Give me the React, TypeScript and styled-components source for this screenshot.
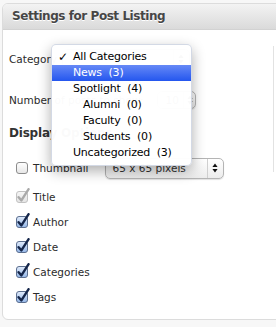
import React from "react";
import styled, { createGlobalStyle } from "styled-components";

const GlobalStyle = createGlobalStyle`
  html, body { margin: 0; padding: 0; background: #f7f7f7; overflow: hidden; }
  body { font-family: "DejaVu Sans", Verdana, sans-serif; color: #333; }
  * { box-sizing: border-box; }
`;

const Page = styled.div`
  width: 276px;
  height: 327px;
  padding: 3px 0 0 2px;
  overflow: hidden;
`;

const Panel = styled.div`
  width: 310px;
  border: 1px solid #dcdcdc;
  border-radius: 6px;
  background: #fff;
`;

const Header = styled.h3`
  margin: 0;
  height: 26px;
  padding-left: 9px;
  border-bottom: 1px solid #d2d2d2;
  border-radius: 5px 5px 0 0;
  background: linear-gradient(#f3f3f3, #dadada);
  color: #464646;
  font-size: 12px;
  font-weight: bold;
  line-height: 25px;
  letter-spacing: -0.45px;
  text-shadow: 0 1px 0 #fff;
`;

const Body = styled.div`
  display: flex;
`;

const Main = styled.div`
  width: 270px;
  padding: 19px 0 14px 6px;
  display: flex;
  flex-direction: column;
`;

const Side = styled.div`
  margin-top: 16px;
  height: 126px;
  border-left: 1px solid #e2e2e2;
`;

const FieldRow = styled.div<{ $h: number; $mt?: number }>`
  display: flex;
  align-items: center;
  height: ${(p) => p.$h}px;
  margin-top: ${(p) => p.$mt ?? 0}px;
`;

const Label = styled.span`
  font-size: 10.5px;
  color: #2b2b2b;
  white-space: nowrap;
`;

const Heading = styled.h4`
  margin: 16px 0 0;
  height: 16px;
  line-height: 16px;
  font-size: 12px;
  font-weight: bold;
  color: #333;
  letter-spacing: -0.2px;
`;

const SelectBox = styled.div<{ $w: number; $h: number; $ml: number }>`
  position: relative;
  width: ${(p) => p.$w}px;
  height: ${(p) => p.$h}px;
  margin-left: ${(p) => p.$ml}px;
  display: flex;
  align-items: center;
  border: 1px solid #b4b4b4;
  border-radius: 5px;
  background: linear-gradient(#ffffff, #ececec);
  box-shadow: 0 1px 1px rgba(0, 0, 0, 0.12);
  font-size: 10.5px;
  color: #333;
`;

const SelectText = styled.span`
  flex: 1;
  padding-left: 7px;
  white-space: nowrap;
`;

const ArrowPart = styled.span<{ $w: number }>`
  width: ${(p) => p.$w}px;
  height: 100%;
  display: flex;
  align-items: center;
  justify-content: center;
  border-left: 1px solid #cfcfcf;
`;

const Menu = styled.div`
  position: absolute;
  left: -12px;
  top: -6px;
  width: 141px;
  padding: 4px 0;
  background: rgba(255, 255, 255, 0.975);
  border: 1px solid rgba(110, 130, 170, 0.3);
  border-radius: 5px;
  box-shadow: 0 5px 14px rgba(0, 0, 0, 0.32);
  z-index: 5;
`;

const MenuItem = styled.div<{ $indent?: boolean; $active?: boolean }>`
  position: relative;
  height: 16px;
  line-height: 16px;
  padding-left: ${(p) => (p.$indent ? 31 : 21)}px;
  font-size: 11px;
  letter-spacing: -0.2px;
  white-space: pre;
  color: ${(p) => (p.$active ? "#fff" : "#000")};
  background: ${(p) =>
    p.$active ? "linear-gradient(#6689f6, #2456ee)" : "transparent"};
`;

const Tick = styled.span`
  position: absolute;
  left: 6px;
  top: 0;
  font-size: 12px;
  font-weight: bold;
`;

const CheckRow = styled.label<{ $mt: number }>`
  display: flex;
  align-items: center;
  height: 16px;
  margin-top: ${(p) => p.$mt}px;
  padding-left: 7px;
`;

const BoxSvg = styled.svg`
  flex: none;
  margin-right: 3px;
  margin-top: -3px;
`;

type BoxState = "off" | "on" | "disabled";

function CheckBox({ state }: { state: BoxState }) {
  const id = `g-${state}`;
  const fillTop = state === "on" ? "#e2ecfb" : state === "disabled" ? "#f6f6f6" : "#ffffff";
  const fillBot = state === "on" ? "#93b6e8" : state === "disabled" ? "#e4e4e4" : "#e6e6e6";
  const stroke = state === "on" ? "#5c6f8f" : state === "disabled" ? "#c2c2c2" : "#8c8c8c";
  const tick = state === "on" ? "#15264a" : "#a9a9a9";
  return (
    <BoxSvg width="14" height="15" viewBox="0 0 14 15">
      <defs>
        <linearGradient id={id} x1="0" y1="0" x2="0" y2="1">
          <stop offset="0" stopColor={fillTop} />
          <stop offset="1" stopColor={fillBot} />
        </linearGradient>
      </defs>
      <rect x="0.5" y="3.5" width="11" height="11" rx="2.5" fill={`url(#${id})`} stroke={stroke} />
      {state !== "off" && (
        <path
          d="M2.6 9.2 L5.4 12.4 L12.6 1.2"
          fill="none"
          stroke={tick}
          strokeWidth="2.4"
          strokeLinecap="round"
          strokeLinejoin="round"
        />
      )}
    </BoxSvg>
  );
}

function UpDown() {
  return (
    <svg width="6" height="10" viewBox="0 0 6 10">
      <path d="M3 0.5 L5.6 4 L0.4 4 Z M3 9.5 L5.6 6 L0.4 6 Z" fill="#111" />
    </svg>
  );
}

const categories: { name: string; indent?: boolean; active?: boolean; selected?: boolean }[] = [
  { name: "All Categories", selected: true },
  { name: "News  (3)", active: true },
  { name: "Spotlight  (4)" },
  { name: "Alumni  (0)", indent: true },
  { name: "Faculty  (0)", indent: true },
  { name: "Students  (0)", indent: true },
  { name: "Uncategorized  (3)" },
];

const options: { label: string; state: BoxState; mt: number }[] = [
  { label: "Title", state: "disabled", mt: 10 },
  { label: "Author", state: "on", mt: 9 },
  { label: "Date", state: "on", mt: 9 },
  { label: "Categories", state: "on", mt: 9 },
  { label: "Tags", state: "on", mt: 9 },
];

export default function App() {
  return (
    <Page>
      <GlobalStyle />
      <Panel>
        <Header>Settings for Post Listing</Header>
        <Body>
          <Main>
            <FieldRow $h={20}>
              <Label>Category</Label>
              <SelectBox $w={128} $h={20} $ml={5}>
                <SelectText />
                <ArrowPart $w={16}>
                  <UpDown />
                </ArrowPart>
                <Menu>
                  {categories.map((c) => (
                    <MenuItem key={c.name} $indent={c.indent} $active={c.active}>
                      {c.selected && <Tick>✓</Tick>}
                      {c.name}
                    </MenuItem>
                  ))}
                </Menu>
              </SelectBox>
            </FieldRow>
            <FieldRow $h={18} $mt={22}>
              <Label>Number of posts to show:</Label>
              <SelectBox $w={39} $h={18} $ml={14}>
                <SelectText>10</SelectText>
                <ArrowPart $w={12}>
                  <UpDown />
                </ArrowPart>
              </SelectBox>
            </FieldRow>
            <Heading>Display Options</Heading>
            <FieldRow $h={22} $mt={16}>
              <CheckRow $mt={0} as="span">
                <CheckBox state="off" />
                <Label>Thumbnail</Label>
              </CheckRow>
              <SelectBox $w={119} $h={21} $ml={16}>
                <SelectText>65 x 65 pixels</SelectText>
                <ArrowPart $w={16}>
                  <UpDown />
                </ArrowPart>
              </SelectBox>
            </FieldRow>
            {options.map((o) => (
              <CheckRow key={o.label} $mt={o.mt}>
                <CheckBox state={o.state} />
                <Label>{o.label}</Label>
              </CheckRow>
            ))}
          </Main>
          <Side />
        </Body>
      </Panel>
    </Page>
  );
}
